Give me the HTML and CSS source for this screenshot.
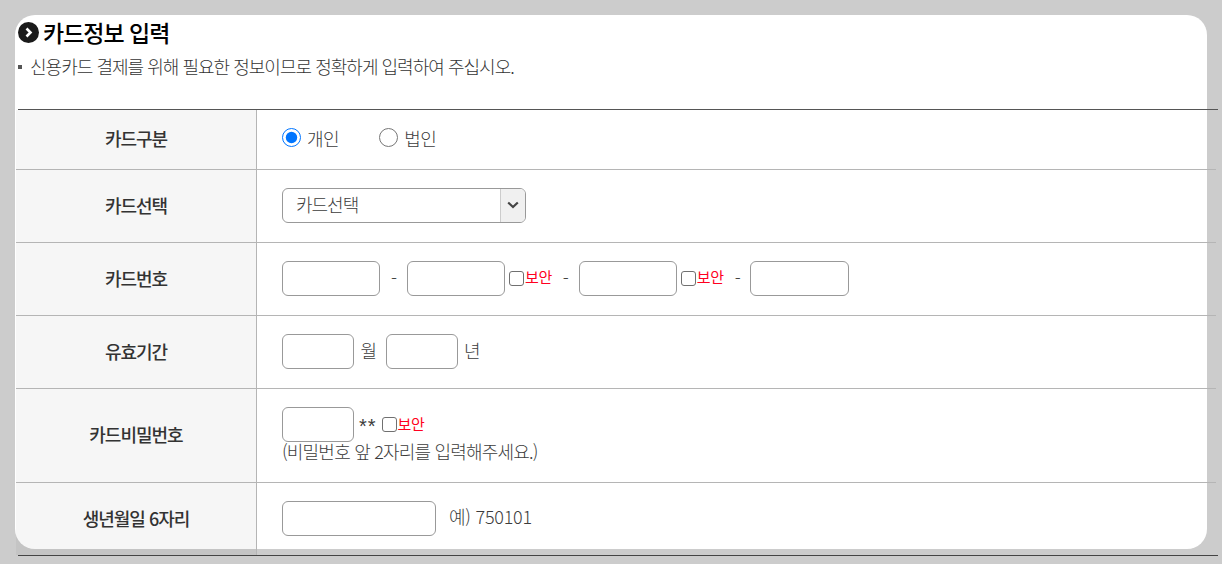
FILE: index.html
```html
<!DOCTYPE html>
<html lang="ko">
<head>
<meta charset="utf-8">
<title>카드정보 입력</title>
<link rel="stylesheet" href="styles.css">
</head>
<body>
<main class="card">
  <h2 class="title">
    <svg class="bullet" width="21" height="21" viewBox="0 0 21 21"><circle cx="10.5" cy="10.5" r="10.5" fill="#1a1a1a"/><path d="M8.500 6.500l4 4-4 4" fill="none" stroke="#fff" stroke-width="2.600"/></svg>
    <span>카드정보 입력</span>
  </h2>
  <p class="note"><i class="square"></i>신용카드 결제를 위해 필요한 정보이므로 정확하게 입력하여 주십시오.</p>
  <div class="rule"></div>
  <table class="form">
    <tr class="r1">
      <th>카드구분</th>
      <td>
        <label class="radio"><input type="radio" name="kind" checked>개인</label>
        <label class="radio"><input type="radio" name="kind">법인</label>
      </td>
    </tr>
    <tr class="r2">
      <th>카드선택</th>
      <td>
        <div class="select"><span>카드선택</span><b class="arrow"><svg width="12" height="8" viewBox="0 0 12 8"><path d="M1.200 1.500L6 6l4.800-4.500" fill="none" stroke="#444" stroke-width="2.200"/></svg></b></div>
      </td>
    </tr>
    <tr class="r3">
      <th>카드번호</th>
      <td>
        <div class="line">
          <input class="in w98" type="text"><span class="dash">-</span><input class="in w98" type="text"><input class="chk" type="checkbox"><span class="sec">보안</span><span class="dash">-</span><input class="in w98" type="text"><input class="chk" type="checkbox"><span class="sec">보안</span><span class="dash">-</span><input class="in w99" type="text">
        </div>
      </td>
    </tr>
    <tr class="r4">
      <th>유효기간</th>
      <td>
        <div class="line">
          <input class="in w72" type="text"><span class="unit">월</span><input class="in w72" type="text"><span class="unit">년</span>
        </div>
      </td>
    </tr>
    <tr class="r5">
      <th>카드비밀번호</th>
      <td>
        <div class="line">
          <input class="in w72" type="text"><span class="stars">**</span><input class="chk" type="checkbox"><span class="sec">보안</span>
        </div>
        <div class="hint">(비밀번호 앞 2자리를 입력해주세요.)</div>
      </td>
    </tr>
    <tr class="r6">
      <th>생년월일 6자리</th>
      <td>
        <div class="line">
          <input class="in w154" type="text"><span class="example">예) 750101</span>
        </div>
      </td>
    </tr>
  </table>
  <div class="rule bottom"></div>
</main>
</body>
</html>
```
FILE: styles.css
```css
* { box-sizing: border-box; }
html, body { margin: 0; height: 564px; overflow: hidden; }
body {
  background: #ccc;
  padding: 15px;
  font-family: "Noto Sans CJK KR", "Noto Sans", sans-serif;
  color: #3c3c3c;
  letter-spacing: -1px;
}
.card {
  width: 1192px;
  height: 534px;
  background: #fff;
  border-radius: 20px;
}
.title {
  display: flex;
  align-items: center;
  gap: 4px;
  margin: 0;
  padding: 0 0 2px 3px;
  height: 36px;
  font-size: 23px;
  line-height: 26px;
  font-weight: 500;
  color: #000;
}
.note {
  display: flex;
  align-items: center;
  margin: 0;
  padding: 0 0 2px 3px;
  height: 32px;
  font-size: 18px;
  font-weight: 300;
  letter-spacing: -0.980px;
  color: #333;
}
.square {
  width: 4px;
  height: 4px;
  background: #555;
  margin: 2px 8px 0 0;
}
.rule {
  width: 1200px;
  height: 1px;
  margin: 26px 0 0 3px;
  background: #555;
}
.rule.bottom { margin-top: 0; background: #444; }
.form {
  border-collapse: separate;
  border-spacing: 0;
  table-layout: fixed;
  width: 1200px;
  margin-left: 1px;
  position: relative;
}
.form th {
  width: 241px;
  padding: 0 0 3px;
  background: rgba(0, 0, 0, 0.035);
  font-size: 18px;
  font-weight: 500;
  color: #333;
  text-align: center;
  border-right: 1px solid #b5b5b5;
  border-bottom: 1px solid #b5b5b5;
}
.form td {
  padding: 0 0 2px 25px;
  font-size: 18px;
  font-weight: 300;
  border-bottom: 1px solid #b5b5b5;
}
.r1 { height: 60px; }
.r2, .r3, .r4 { height: 73px; }
.r5 { height: 94px; }
.r6 { height: 72px; }
.r6 td { vertical-align: top; padding-top: 18px; }
.r6 th, .r6 td { border-bottom: 0; }
.radio {
  display: inline-flex;
  align-items: center;
  margin-right: 36px;
  letter-spacing: -0.500px;
}
.radio input {
  width: 19px;
  height: 19px;
  margin: 0 6px 0 0;
  accent-color: #0075ff;
}
.select {
  display: flex;
  width: 244px;
  height: 35px;
  border: 1px solid #999;
  border-radius: 6px;
  overflow: hidden;
  align-items: center;
}
.select span { flex: 1; padding: 0 0 2px 13px; }
.arrow {
  display: flex;
  align-items: center;
  justify-content: center;
  width: 25px;
  height: 100%;
  background: #f0f0f0;
  border-left: 1px solid #ccc;
}
.line { display: flex; align-items: center; }
.line > span { padding-bottom: 3px; }
.in {
  height: 35px;
  padding: 0;
  border: 1px solid #999;
  border-radius: 6px;
  background: #fff;
}
.w98 { width: 98px; }
.w99 { width: 99px; margin-left: -1px; }
.w72 { width: 72px; }
.w154 { width: 154px; }
.chk {
  appearance: none;
  width: 15px;
  height: 15px;
  margin: 0 1px 0 4px;
  background: #fff;
  border: 1.500px solid #707070;
  border-radius: 3px;
}
.sec { color: #ff0020; font-size: 15px; font-weight: 400; letter-spacing: -0.400px; }
.dash { margin: 0 13px 0 11px; width: 3px; text-align: center; }
.unit { margin: 0 9.500px 0 6.500px; }
.line > .stars { margin: 0 1px 0 5px; font-family: "Liberation Sans", sans-serif; font-size: 20px; line-height: 18px; letter-spacing: 1px; padding: 2px 0 0; }
.hint { margin-top: -2px; line-height: 22px; letter-spacing: -0.800px; }
.line > .example { margin-left: 13px; letter-spacing: -0.250px; padding-bottom: 5px; }
```
